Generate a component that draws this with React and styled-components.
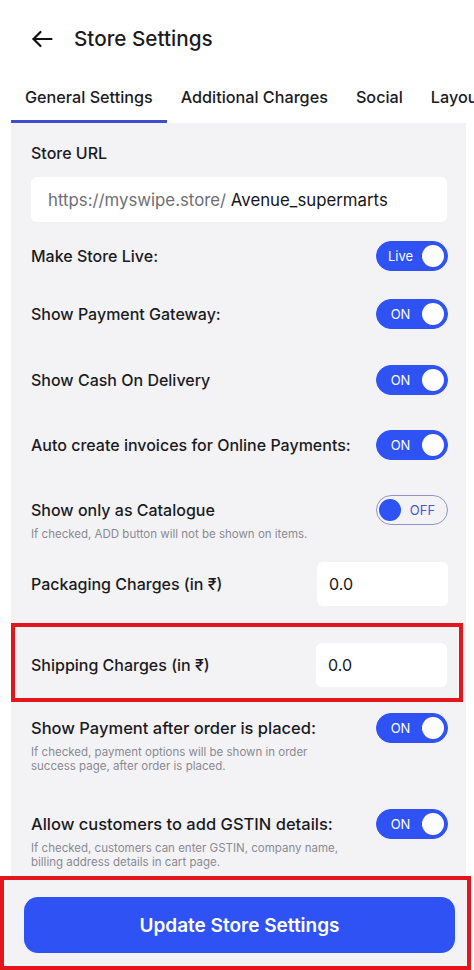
import React from "react";
import styled, { createGlobalStyle } from "styled-components";

const GlobalStyle = createGlobalStyle`
  html, body { margin: 0; padding: 0; background: #ffffff; }
  body { font-family: Inter, "Noto Sans", "Liberation Sans", sans-serif; color: #1b1b1f; }
  * { box-sizing: border-box; }
`;

const BLUE = "#2f52f4";
const RED = "#e3161d";
const PANEL = "#f3f3f6";

const Page = styled.div`
  width: 474px;
  height: 970px;
  display: flex;
  flex-direction: column;
  overflow: hidden;
  background: #fff;
`;

const Header = styled.header`
  height: 78px;
  flex: none;
  display: flex;
  align-items: center;
  padding-left: 30px;
  gap: 20px;
`;

const BackButton = styled.button`
  border: 0;
  background: none;
  padding: 0;
  width: 24px;
  height: 24px;
  display: flex;
  color: #111;
`;

const Title = styled.h1`
  margin: 0;
  font-size: 20.7px;
  font-weight: 500;
  line-height: 24px;
  color: #1b1b1f;
`;

const Tabs = styled.nav`
  height: 45px;
  flex: none;
  display: flex;
  margin-left: 11px;
  overflow: hidden;
  white-space: nowrap;
`;

const Tab = styled.div`
  height: 45px;
  padding: 9px 14px 0;
  font-size: 16.2px;
  font-weight: 500;
  line-height: 20px;
  color: #1b1b1f;
  border-bottom: 3px solid ${(p) => (p.$active ? "#3d4fd0" : "transparent")};
  flex: none;
`;

const Panel = styled.main`
  flex: 1;
  margin: 0 8px 0 11px;
  background: ${PANEL};
  padding: 20px 18px 0 20px;
  overflow: hidden;
  display: flex;
  flex-direction: column;
`;

const SectionLabel = styled.div`
  font-size: 16px;
  font-weight: 500;
  line-height: 20px;
`;

const UrlBox = styled.div`
  margin-top: 14px;
  height: 45px;
  width: 416px;
  background: #fff;
  border-radius: 6px;
  display: flex;
  align-items: center;
  padding-left: 17px;
  font-size: 16.8px;
  white-space: nowrap;
`;

const UrlPrefix = styled.span`
  color: #6e6e73;
`;

const UrlSlug = styled.span`
  color: #151518;
`;

const Row = styled.div`
  display: flex;
  align-items: center;
  justify-content: space-between;
  height: ${(p) => p.$h || 30}px;
  margin-top: ${(p) => p.$mt}px;
`;

const RowLabel = styled.div`
  font-size: ${(p) => (p.$big ? 16.5 : 16)}px;
  font-weight: 500;
  line-height: 20px;
  white-space: nowrap;
`;

const Hint = styled.div`
  margin-top: 2px;
  font-size: 11.5px;
  line-height: 14px;
  color: #8a8a92;
  max-width: ${(p) => p.$max || 400}px;
`;

const Track = styled.div`
  width: 72px;
  height: 30px;
  border-radius: 15px;
  display: flex;
  align-items: center;
  padding: 0 3px 0 2px;
  background: ${(p) => (p.$on ? BLUE : "transparent")};
  border: 1px solid ${(p) => (p.$on ? BLUE : "#8e93c9")};
  flex: none;
`;

const TrackText = styled.span`
  flex: 1;
  text-align: center;
  font-size: 13px;
  color: ${(p) => (p.$on ? "#ffffff" : "#4a58c8")};
`;

const Knob = styled.span`
  width: 22px;
  height: 22px;
  border-radius: 50%;
  background: ${(p) => (p.$on ? "#ffffff" : BLUE)};
  flex: none;
`;

const Toggle = ({ on, text }) => (
  <Track $on={on}>
    {on ? (
      <>
        <TrackText $on>{text}</TrackText>
        <Knob $on />
      </>
    ) : (
      <>
        <Knob />
        <TrackText>{text}</TrackText>
      </>
    )}
  </Track>
);

const AmountInput = styled.div`
  width: 131px;
  height: 44px;
  background: #fff;
  border-radius: 6px;
  display: flex;
  align-items: center;
  padding-left: 12px;
  font-size: 16px;
  color: #151518;
`;

const Highlight = styled.div`
  margin: 17px -15px 0 -20px;
  border: 4px solid ${RED};
  padding: 16px 12px 11px 16px;
  display: flex;
  align-items: center;
  justify-content: space-between;
`;

const Footer = styled.footer`
  flex: none;
  height: 94px;
  width: 471px;
  background: ${PANEL};
  border: 4px solid ${RED};
  padding: 17px 12px 0 20px;
`;

const PrimaryButton = styled.button`
  width: 100%;
  height: 56px;
  border: 0;
  border-radius: 14px;
  background: ${BLUE};
  color: #fff;
  font-family: inherit;
  font-size: 19px;
  font-weight: 600;
`;

const BackArrow = () => (
  <svg width="24" height="24" viewBox="0 0 24 24" fill="none" stroke="currentColor" strokeWidth="2.2" strokeLinecap="round" strokeLinejoin="round">
    <path d="M21.5 12H3.5" />
    <path d="M10.5 5l-7 7 7 7" />
  </svg>
);

export default function App() {
  return (
    <>
      <GlobalStyle />
      <Page>
        <Header>
          <BackButton aria-label="Back">
            <BackArrow />
          </BackButton>
          <Title>Store Settings</Title>
        </Header>
        <Tabs>
          <Tab $active>General Settings</Tab>
          <Tab>Additional Charges</Tab>
          <Tab>Social</Tab>
          <Tab>Layout</Tab>
        </Tabs>
        <Panel>
          <SectionLabel>Store URL</SectionLabel>
          <UrlBox>
            <UrlPrefix>https://myswipe.store/</UrlPrefix>&nbsp;<UrlSlug>Avenue_supermarts</UrlSlug>
          </UrlBox>

          <Row $mt={19}>
            <RowLabel>Make Store Live:</RowLabel>
            <Toggle on text="Live" />
          </Row>
          <Row $mt={28}>
            <RowLabel>Show Payment Gateway:</RowLabel>
            <Toggle on text="ON" />
          </Row>
          <Row $mt={36}>
            <RowLabel>Show Cash On Delivery</RowLabel>
            <Toggle on text="ON" />
          </Row>
          <Row $mt={35}>
            <RowLabel>Auto create invoices for Online Payments:</RowLabel>
            <Toggle on text="ON" />
          </Row>
          <Row $mt={35}>
            <RowLabel>Show only as Catalogue</RowLabel>
            <Toggle text="OFF" />
          </Row>
          <Hint>If checked, ADD button will not be shown on items.</Hint>

          <Row $mt={21} $h={44}>
            <RowLabel>Packaging Charges (in ₹)</RowLabel>
            <AmountInput>0.0</AmountInput>
          </Row>
          <Highlight>
            <RowLabel>Shipping Charges (in ₹)</RowLabel>
            <AmountInput>0.0</AmountInput>
          </Highlight>

          <Row $mt={11}>
            <RowLabel $big>Show Payment after order is placed:</RowLabel>
            <Toggle on text="ON" />
          </Row>
          <Hint $max={315}>If checked, payment options will be shown in order success page, after order is placed.</Hint>

          <Row $mt={36}>
            <RowLabel $big>Allow customers to add GSTIN details:</RowLabel>
            <Toggle on text="ON" />
          </Row>
          <Hint $max={315}>If checked, customers can enter GSTIN, company name, billing address details in cart page.</Hint>
        </Panel>
        <Footer>
          <PrimaryButton>Update Store Settings</PrimaryButton>
        </Footer>
      </Page>
    </>
  );
}
